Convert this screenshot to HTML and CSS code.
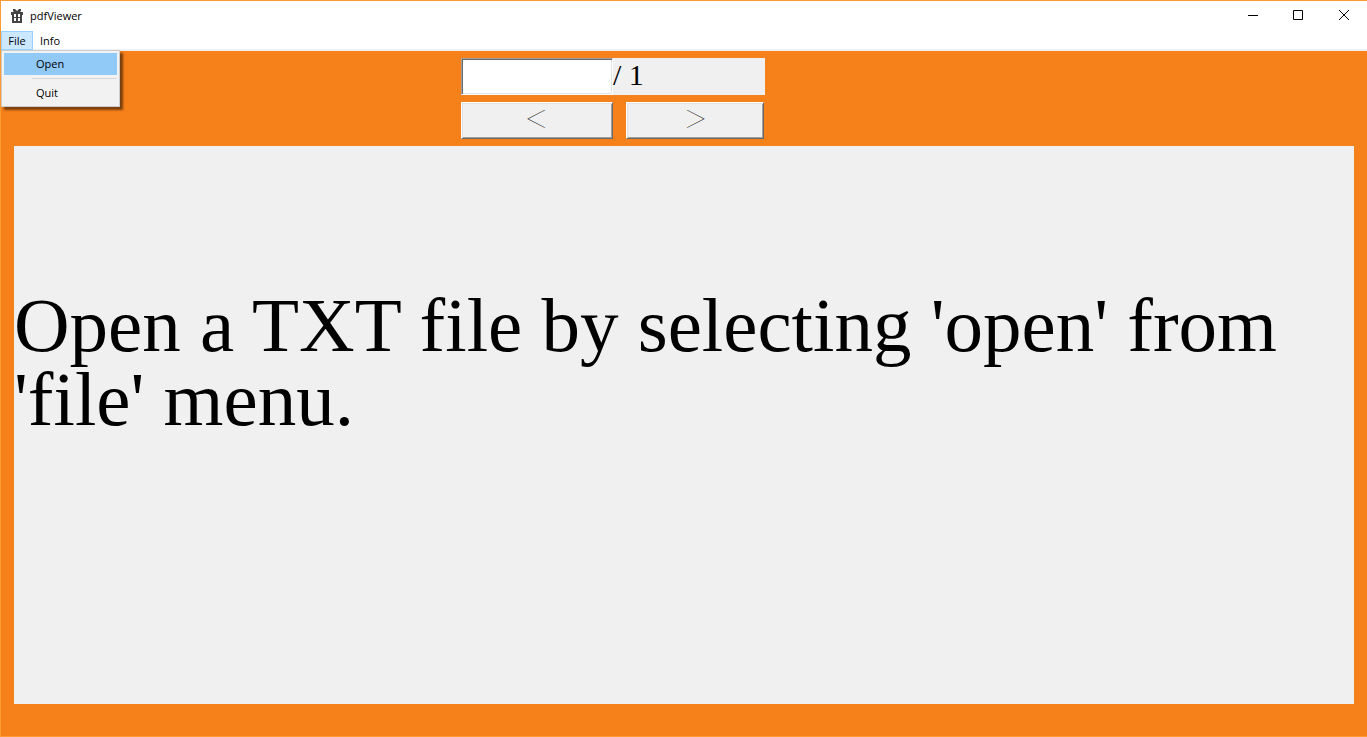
FILE: index.html
```html
<!DOCTYPE html>
<html lang="en">
<head>
<meta charset="utf-8">
<title>pdfViewer</title>
<link rel="stylesheet" href="styles.css">
</head>
<body>
<div class="window">
  <header class="titlebar">
    <svg class="app-icon" width="12" height="14" viewBox="0 0 12 14" aria-hidden="true">
      <path fill="#444" fill-rule="evenodd" d="M2 0h2l2 2 2-2h2v2l-1 1h3v3h-1v8H1V6H0V3h3L2 2zM3 5v3h2V5zM7 5v3h2V5zM3 9v3h2V9zM7 9v3h2V9z"/>
    </svg>
    <h1 class="title">pdfViewer</h1>
    <div class="controls">
      <button class="control" type="button" aria-label="Minimize"><svg width="11" height="11" viewBox="0 0 11 11"><path d="M1 5.500h10" stroke="#000" fill="none"/></svg></button>
      <button class="control" type="button" aria-label="Maximize"><svg width="11" height="11" viewBox="0 0 11 11"><path d="M.5.500h9v9h-9z" stroke="#000" fill="none"/></svg></button>
      <button class="control" type="button" aria-label="Close"><svg width="11" height="11" viewBox="0 0 11 11"><path d="M0 0l10 10M10 0L0 10" stroke="#000" fill="none"/></svg></button>
    </div>
  </header>
  <nav class="menubar">
    <div class="menu">
      <button class="menu-title menu-title-open" type="button">File</button>
      <div class="dropdown">
        <button class="item item-active" type="button">Open</button>
        <hr class="separator">
        <button class="item" type="button">Quit</button>
      </div>
    </div>
    <button class="menu-title" type="button">Info</button>
  </nav>
  <main class="content">
    <div class="toolbar">
      <div class="pager">
        <div class="page-row">
          <input class="page-input" id="page" type="text">
          <label class="page-total" for="page">/ 1</label>
        </div>
        <div class="button-row">
          <button class="step step-prev" type="button">&lt;</button>
          <button class="step step-next" type="button">&gt;</button>
        </div>
      </div>
    </div>
    <section class="viewer">
      <p class="message">Open a TXT file by selecting 'open' from 'file' menu.</p>
    </section>
  </main>
</div>
</body>
</html>
```

FILE: styles.css
```css
* {
  box-sizing: border-box;
}

body {
  margin: 0;
  font-family: "Open Sans", "Noto Sans", sans-serif;
  font-size: 11px;
  color: #000;
}

button {
  font: inherit;
  color: inherit;
  border: 0;
  padding: 0;
  background: none;
}

.window {
  display: flex;
  flex-direction: column;
  min-height: 100vh;
  border: 1px solid #ff9a33;
  border-right: 0;
  background: #f6801a;
}

.titlebar {
  display: flex;
  align-items: center;
  height: 30px;
  padding-left: 10px;
  background: #fff;
}

.title {
  margin: 0 0 0 7px;
  padding-bottom: 2px;
  font-size: 11px;
  font-weight: 400;
}

.controls {
  display: flex;
  margin-left: auto;
}

.control {
  display: grid;
  place-items: center;
  width: 46px;
  height: 30px;
  padding-bottom: 2px;
}

.control svg {
  display: block;
}

.menubar {
  display: flex;
  height: 20px;
  background: #fff;
  border-bottom: 2px solid #f0f0f0;
}

.menu {
  position: relative;
}

.menu-title {
  height: 19px;
  padding: 0 7px;
  line-height: 17px;
}

.menu-title-open {
  width: 32px;
  padding: 0;
  border: 1px solid #99d1ff;
  background: #cce8ff;
}

.dropdown {
  position: absolute;
  top: 19px;
  left: 0;
  z-index: 1;
  width: 119px;
  padding: 2px;
  border: 1px solid #ccc;
  background: #f2f2f2;
  box-shadow: 3px 3px 2px rgba(0, 0, 0, 0.5);
}

.item {
  display: block;
  width: 100%;
  height: 22px;
  padding: 0 0 2px 32px;
  text-align: left;
}

.item-active {
  background: #91c9f7;
}

.separator {
  height: 1px;
  margin: 3px 0 3px 28px;
  border: 0;
  background: #d7d7d7;
}

.content {
  flex: 1;
  display: flex;
  flex-direction: column;
  padding: 7px 13px 32px;
  font-family: "Liberation Serif", "Times New Roman", serif;
}

.toolbar {
  display: grid;
  grid-template-columns: 447fr 304px 589fr;
  margin-bottom: 7px;
}

.pager {
  grid-column: 2;
}

.page-row {
  display: flex;
  height: 37px;
  margin-bottom: 7px;
  background: #f0f0f0;
}

.page-input {
  width: 152px;
  padding: 0 4px;
  border: 1px solid;
  border-color: #a0a0a0 #fff #fff #a0a0a0;
  background: #fff;
  box-shadow: inset 1px 1px #696969, inset -1px -1px #e3e3e3;
  font: inherit;
  font-size: 30px;
}

.page-total {
  font-size: 30px;
  line-height: 34px;
}

.button-row {
  display: flex;
  gap: 13px;
}

.step {
  height: 37px;
  padding-bottom: 8px;
  border: 1px solid;
  border-color: #fff #696969 #696969 #fff;
  background: #f0f0f0;
  box-shadow: inset 1px 1px #e3e3e3, inset -1px -1px #a0a0a0;
  font-family: Lato, "Liberation Serif", sans-serif;
  font-size: 48px;
  font-weight: 100;
  line-height: 26px;
}

.step-prev {
  width: 152px;
}

.step-next {
  width: 138px;
}

.viewer {
  flex: 1;
  display: flex;
  flex-direction: column;
  justify-content: center;
  padding-bottom: 126px;
  background: #f0f0f0;
}

.message {
  margin: 0;
  font-size: 77px;
  line-height: 74px;
}
```
